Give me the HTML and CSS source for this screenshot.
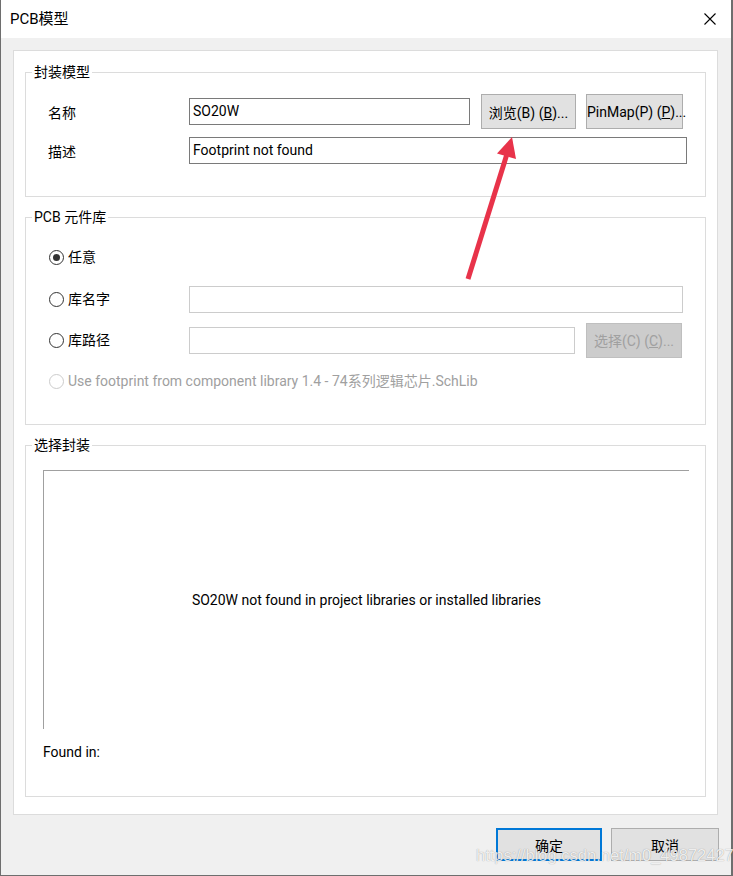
FILE: index.html
```html
<!DOCTYPE html>
<html lang="zh-CN">
<head>
<meta charset="utf-8">
<title>PCB模型</title>
<link rel="stylesheet" href="styles.css">
</head>
<body>
<div class="window">
  <div class="titlebar">
    <span class="title">PCB模型</span>
    <svg class="close" width="12" height="12" viewBox="0 0 12 12"><path d="M0.5 0.5 L11.5 11.5 M11.5 0.5 L0.5 11.5" stroke="#000" stroke-width="1.1" fill="none"/></svg>
  </div>
  <div class="client">
    <div class="panel">
      <div class="group g1">
        <span class="legend">封装模型</span>
        <div class="row r-name">
          <span class="label">名称</span>
          <div class="input in-name">SO20W</div>
          <button class="btn btn-browse">浏览(B) (<u>B</u>)...</button>
          <button class="btn btn-pinmap">PinMap(P) (<u>P</u>)...</button>
        </div>
        <div class="row r-desc">
          <span class="label">描述</span>
          <div class="input in-desc">Footprint not found</div>
        </div>
      </div>

      <div class="group g2">
        <span class="legend">PCB 元件库</span>
        <div class="row rr rr1">
          <span class="radio checked"></span><span class="rlabel">任意</span>
        </div>
        <div class="row rr rr2">
          <span class="radio"></span><span class="rlabel">库名字</span>
          <div class="input disabled in-libname"></div>
        </div>
        <div class="row rr rr3">
          <span class="radio"></span><span class="rlabel">库路径</span>
          <div class="input disabled in-libpath"></div>
          <button class="btn btn-disabled">选择(C) (<u>C</u>)...</button>
        </div>
        <div class="row rr rr4">
          <span class="radio off"></span><span class="rlabel off">Use footprint from component library 1.4 - 74系列逻辑芯片.SchLib</span>
        </div>
      </div>

      <div class="group g3">
        <span class="legend">选择封装</span>
        <div class="preview">SO20W not found in project libraries or installed libraries</div>
        <div class="found">Found in:</div>
      </div>
    </div>
    <div class="buttons">
      <button class="btn btn-ok">确定</button>
      <button class="btn btn-cancel">取消</button>
    </div>
  </div>
  <svg class="arrow" width="733" height="876" viewBox="0 0 733 876">
    <line x1="468" y1="279" x2="506.5" y2="155.5" stroke="#e8334a" stroke-width="5"/>
    <polygon points="512,137 497,153.5 516,159" fill="#e8334a"/>
  </svg>
  <div class="watermark">https://blog.csdn.net/m0_49872427</div>
</div>
</body>
</html>
```
FILE: styles.css
```css
* { box-sizing: border-box; }
html, body { margin: 0; padding: 0; background: #3a3a3a; }
body {
  width: 733px;
  height: 876px;
  overflow: hidden;
  font-family: Roboto, "Noto Sans CJK SC", sans-serif;
  font-size: 14px;
  color: #000;
}
.window {
  position: relative;
  width: 733px;
  height: 876px;
  border-left: 1px solid #6e6e6e;
  border-right: 2px solid #6e6e6e;
  border-bottom: 1px solid #6e6e6e;
  background: #f0f0f0;
  display: flex;
  flex-direction: column;
}
.titlebar {
  height: 38px;
  background: #fff;
  display: flex;
  align-items: center;
  justify-content: space-between;
  padding: 0 15px 0 9px;
  flex: none;
}
.title { font-size: 15px; line-height: 20px; }
.close { display: block; }
.client {
  flex: 1;
  padding: 12px 12px 0 12px;
  display: flex;
  flex-direction: column;
}
.panel {
  width: 705px;
  height: 765px;
  background: #fff;
  border: 1px solid #dcdcdc;
  padding: 0 0 0 11px;
}
.group {
  position: relative;
  width: 681px;
  border: 1px solid #dcdcdc;
}
.legend {
  position: absolute;
  top: -11px;
  left: 6px;
  padding: 0 2px;
  background: #fff;
  line-height: 20px;
  white-space: nowrap;
}
.g1 { margin-top: 21px; height: 125px; padding: 21px 0 0 22px; }
.g2 { margin-top: 20px; height: 208px; padding: 22px 0 0 23px; }
.g3 { margin-top: 20px; height: 352px; padding: 24px 0 0 17px; }

.row { display: flex; align-items: center; }
.label { width: 141px; line-height: 20px; padding-top: 2px; }
.r-name { height: 35px; }
.r-desc { margin-top: 8px; height: 27px; }

.input {
  height: 27px;
  border: 1px solid #7a7a7a;
  background: #fff;
  padding: 0 3px;
  line-height: 25px;
  white-space: nowrap;
}
.input.disabled { border-color: #cccccc; }
.in-name { width: 281px; }
.in-desc { width: 498px; }
.in-libname { width: 494px; }
.in-libpath { width: 386px; }

.btn {
  font: inherit;
  color: #000;
  background: #e1e1e1;
  border: 1px solid #adadad;
  height: 35px;
  padding: 0;
  margin: 0;
  white-space: nowrap;
}
.btn-browse { width: 95px; margin-left: 11px; }
.btn-pinmap { width: 97px; margin-left: 10px; }
.btn-disabled {
  width: 96px;
  margin-left: 11px;
  background: #cccccc;
  border-color: #bfbfbf;
  color: #a0a0a0;
}

.rr { height: 34px; }
.rr2 { margin-top: 8px; }
.rr3 { margin-top: 7px; }
.rr4 { margin-top: 7px; }
.radio {
  flex: none;
  width: 15px;
  height: 15px;
  border: 1px solid #333;
  border-radius: 50%;
  background: #fff;
  display: flex;
  align-items: center;
  justify-content: center;
}
.radio.checked::after {
  content: "";
  width: 7px;
  height: 7px;
  border-radius: 50%;
  background: #333;
}
.radio.off { border-color: #cccccc; }
.rlabel { margin-left: 4px; width: 121px; line-height: 20px; white-space: nowrap; }
.rlabel.off { color: #a0a0a0; width: auto; }

.preview {
  width: 646px;
  height: 259px;
  border-top: 1px solid #a0a0a0;
  border-left: 1px solid #a0a0a0;
  display: flex;
  align-items: center;
  justify-content: center;
}
.found { margin-top: 13px; line-height: 20px; }

.buttons {
  display: flex;
  justify-content: flex-end;
  gap: 9px;
  margin-top: 13px;
}
.btn-ok {
  width: 106px;
  height: 33px;
  border: 2px solid #0078d7;
}
.btn-cancel { width: 108px; height: 33px; }

.arrow {
  position: absolute;
  left: -1px;
  top: 0;
  pointer-events: none;
}
.watermark {
  position: absolute;
  left: 475px;
  top: 845px;
  font-family: "Liberation Sans", sans-serif;
  font-size: 16.5px;
  line-height: 20px;
  color: rgba(255, 255, 255, 0.85);
  text-shadow: 0 0 1px rgba(0, 0, 0, 0.4);
  white-space: nowrap;
  pointer-events: none;
}
```
